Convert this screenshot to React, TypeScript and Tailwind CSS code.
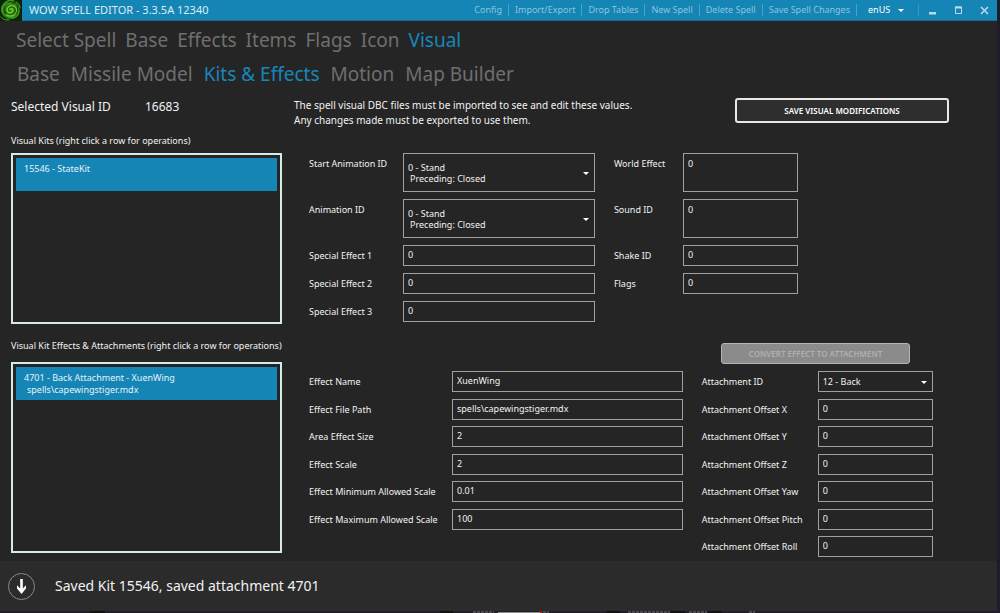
import React, { useId } from "react";

const frame = "border border-[#a0a0a0] bg-[#252525] text-[#f2f2f2] text-[9px] leading-3 rounded-none outline-none";

function Arrow() {
  return (
    <svg
      className="pointer-events-none absolute right-[6px] top-1/2 -mt-[1px] h-[3px] w-[6px]"
      viewBox="0 0 6 3"
      aria-hidden="true"
    >
      <path d="M0 0h6L3 3z" fill="#ffffff" />
    </svg>
  );
}

type FieldProps = {
  label: string;
  value: string;
  kind?: "text" | "area" | "select" | "tall-select";
  detail?: string;
  second?: boolean;
};

function Field({ label, value, kind = "text", detail, second }: FieldProps) {
  const id = useId();
  const column = second ? "col-start-3 pl-[19px]" : "col-start-1";
  const fieldColumn = second ? "col-start-4" : "col-start-2";
  return (
    <>
      <label
        htmlFor={id}
        className={`${column} pt-[5px] text-[9px] leading-3 whitespace-nowrap text-[#f2f2f2]`}
      >
        {label}
      </label>
      {kind === "text" && (
        <input
          id={id}
          defaultValue={value}
          className={`${frame} ${fieldColumn} h-[21px] w-full min-w-0 px-1 pb-[2px]`}
        />
      )}
      {kind === "area" && (
        <textarea
          id={id}
          defaultValue={value}
          className={`${frame} ${fieldColumn} block h-[39px] w-full min-w-0 resize-none px-1 pt-1`}
        />
      )}
      {kind === "select" && (
        <div className={`${fieldColumn} relative h-[21px]`}>
          <select id={id} className={`${frame} block h-full w-full appearance-none px-1`}>
            <option>{value}</option>
          </select>
          <Arrow />
        </div>
      )}
      {kind === "tall-select" && (
        <div className={`${fieldColumn} relative h-[39px]`}>
          <select id={id} className={`${frame} block h-full w-full appearance-none px-1 pb-[10px]`}>
            <option>{value}</option>
          </select>
          <span className="pointer-events-none absolute bottom-[7px] left-[7px] text-[9px] leading-3 text-[#f2f2f2]">
            {detail}
          </span>
          <Arrow />
        </div>
      )}
    </>
  );
}

function Tabs({ items, active, className }: { items: string[]; active: string; className: string }) {
  return (
    <nav className={`flex items-center whitespace-nowrap text-[19px] leading-6 ${className}`}>
      {items.map((item) => (
        <button key={item} type="button" className={item === active ? "text-[#1886bb]" : "text-[#6f6f6f]"}>
          {item}
        </button>
      ))}
    </nav>
  );
}

function Spiral() {
  return (
    <svg className="h-[21px] w-[22px] shrink-0" viewBox="0 0 22 21" aria-hidden="true">
      <rect width="22" height="21" fill="#0b2509" />
      <circle cx="10.500" cy="10" r="9.500" fill="#1f6412" />
      <g fill="none" strokeLinecap="round">
        <path d="M10 10c1-2 4-1 3 1s-5 3-6 0 1-6 5-6 7 3 5 7-6 6-10 4-6-6-4-10 6-6 10-5" stroke="#3c9a1f" strokeWidth="2.200" />
        <path d="M10 9c2-1 4 1 2 3s-5 0-5-2 3-5 6-4 5 4 3 7-6 4-9 2" stroke="#7fd02b" strokeWidth="1.100" />
        <path d="M3 12c0-5 3-9 8-9M19 11c0 4-3 7-7 7M1 17c2 3 5 3 8 3M16 2c3 1 4 4 4 6" stroke="#55b026" strokeWidth="1" />
        <path d="M5 6c-1 2-2 5 0 8M17 6c1 3 1 6-1 8M8 2c2-1 5-1 7 1" stroke="#0d3509" strokeWidth="0.900" />
      </g>
    </svg>
  );
}

const commands = ["Config", "Import/Export", "Drop Tables", "New Spell", "Delete Spell", "Save Spell Changes"];

function TitleBar() {
  return (
    <header className="flex h-[21px] items-center border-b border-[#146d97] bg-[#1585b5]">
      <Spiral />
      <h1 className="ml-[7px] text-[11px] leading-4 whitespace-nowrap text-[#dcedf5]">
        WOW SPELL EDITOR - 3.3.5A 12340
      </h1>
      <div className="ml-auto flex items-center text-[9px] leading-3 whitespace-nowrap text-[#8cc4de]">
        {commands.map((command) => (
          <button key={command} type="button" className="border-r border-[#4ba2c8] px-[6px]">
            {command}
          </button>
        ))}
        <div className="relative ml-[7px] w-[46px]">
          <select aria-label="Language" className="block w-full appearance-none pl-1 text-white outline-none">
            <option>enUS</option>
          </select>
          <Arrow />
        </div>
        <span className="ml-2 h-3 w-px bg-[#3a98c2]" />
      </div>
      <div className="flex h-full items-center text-[#b9dcec]">
        <button type="button" aria-label="Minimize" className="grid h-full w-[26px] place-items-center">
          <svg className="h-[9px] w-[9px]" viewBox="0 0 9 9" aria-hidden="true">
            <path d="M1 6h7v2.500H1z" fill="currentColor" />
          </svg>
        </button>
        <button type="button" aria-label="Maximize" className="grid h-full w-[26px] place-items-center">
          <svg className="h-[9px] w-[9px]" viewBox="0 0 9 9" aria-hidden="true">
            <path d="M1.500 1h6v6.500h-6z" fill="none" stroke="currentColor" />
            <path d="M1 0.500h7v2H1z" fill="currentColor" />
          </svg>
        </button>
        <button type="button" aria-label="Close" className="grid h-full w-[26px] place-items-center">
          <svg className="h-[9px] w-[9px]" viewBox="0 0 9 9" aria-hidden="true">
            <path d="M1 1l7 7M8 1L1 8" fill="none" stroke="currentColor" strokeWidth="1.500" />
          </svg>
        </button>
      </div>
    </header>
  );
}

function RowList({ title, lines, className }: { title: string; lines: string[]; className: string }) {
  return (
    <>
      <h2 className="text-[9px] leading-3 whitespace-nowrap text-[#f2f2f2]">{title}</h2>
      <ul aria-label={title} className={`border-2 border-[#d5ebe8] p-[3px] ${className}`}>
        <li className="h-[33px] bg-[#1585b5] px-2 pt-[5px] text-[9px] leading-3 text-[#e6f2f8]">
          {lines.map((line, i) => (
            <div key={line} className={i > 0 ? "pl-[3px]" : ""}>
              {line}
            </div>
          ))}
        </li>
      </ul>
    </>
  );
}

function Backdrop() {
  return (
    <svg className="h-[2px] w-full bg-[#211d29]" viewBox="0 0 1000 2" preserveAspectRatio="none" aria-hidden="true">
      <path d="M90 1h15M440 1h13M606 1h14M670 1h15M708 1h14" stroke="#111111" strokeWidth="2" />
      <path d="M473 1h21M543 1h6M628 1h42M689 1h18M749 1h6" stroke="#77757a" strokeDasharray="3 1" />
      <path d="M498 1.500h42" stroke="#8d8d8d" />
      <path d="M540 1h2" stroke="#c01818" strokeWidth="2" />
    </svg>
  );
}

export default function App() {
  return (
    <div className="flex min-h-screen flex-col bg-[#252525] font-['Noto_Sans',sans-serif]">
      <div className="flex flex-1 flex-col border-r-[3px] border-[#1f1c29]">
        <TitleBar />
        <Tabs
          className="mt-[7px] gap-[9px] pl-4"
          items={["Select Spell", "Base", "Effects", "Items", "Flags", "Icon", "Visual"]}
          active="Visual"
        />
        <Tabs
          className="mt-[10px] gap-[11px] pl-[17px]"
          items={["Base", "Missile Model", "Kits & Effects", "Motion", "Map Builder"]}
          active="Kits & Effects"
        />
        <div className="mt-3 flex h-[29px] items-start pr-12 pl-[11px] text-[#f2f2f2]">
          <span className="w-[134px] pt-[1px] text-[12px] leading-4 whitespace-nowrap">Selected Visual ID</span>
          <span className="w-[149px] pt-[1px] text-[12px] leading-4">16683</span>
          <p className="text-[10px] leading-[15px] whitespace-nowrap">
            The spell visual DBC files must be imported to see and edit these values.
            <br />
            Any changes made must be exported to use them.
          </p>
          <button
            type="button"
            className="ml-auto h-[25px] w-[214px] rounded-[3px] border-2 border-[#e8e8e8] bg-[#2e2e2e] text-[8px] font-semibold text-white"
          >
            SAVE VISUAL MODIFICATIONS
          </button>
        </div>

        <section className="mt-2 grid grid-cols-[271fr_624fr] gap-x-[27px] pr-16 pl-[11px]">
          <div className="flex flex-col">
            <RowList title="Visual Kits (right click a row for operations)" lines={["15546 - StateKit"]} className="mt-[6px] h-[171px]" />
          </div>
          <div className="grid grid-cols-[94px_5fr_88px_3fr_135px] content-start gap-y-[7px] pt-[18px]">
            <Field label="Start Animation ID" value="0 - Stand" detail="Preceding: Closed" kind="tall-select" />
            <Field label="World Effect" value="0" kind="area" second />
            <Field label="Animation ID" value="0 - Stand" detail="Preceding: Closed" kind="tall-select" />
            <Field label="Sound ID" value="0" kind="area" second />
            <Field label="Special Effect 1" value="0" />
            <Field label="Shake ID" value="0" second />
            <Field label="Special Effect 2" value="0" />
            <Field label="Flags" value="0" second />
            <Field label="Special Effect 3" value="0" />
          </div>
        </section>

        <section className="mt-4 mb-2 grid grid-cols-[271fr_624fr] gap-x-[27px] pr-16 pl-[11px]">
          <div className="flex flex-col">
            <RowList
              title="Visual Kit Effects & Attachments (right click a row for operations)"
              lines={["4701 - Back Attachment - XuenWing", "spells\\capewingstiger.mdx"]}
              className="mt-[10px] h-[191px]"
            />
          </div>
          <div className="-mb-1 flex flex-col gap-[7px] pt-[3px]">
            <div className="flex justify-end pr-[23px]">
              <button
                type="button"
                disabled
                className="h-[21px] w-[189px] rounded-[3px] border border-[#b4b4b4] bg-[#8b8b8b] text-[8px] font-semibold text-[#b0b0b0]"
              >
                CONVERT EFFECT TO ATTACHMENT
              </button>
            </div>
            <div className="grid flex-1 grid-cols-[143px_2fr_135px_1fr] content-between">
              <Field label="Effect Name" value="XuenWing" />
              <Field label="Attachment ID" value="12 - Back" kind="select" second />
              <Field label="Effect File Path" value="spells\capewingstiger.mdx" />
              <Field label="Attachment Offset X" value="0" second />
              <Field label="Area Effect Size" value="2" />
              <Field label="Attachment Offset Y" value="0" second />
              <Field label="Effect Scale" value="2" />
              <Field label="Attachment Offset Z" value="0" second />
              <Field label="Effect Minimum Allowed Scale" value="0.01" />
              <Field label="Attachment Offset Yaw" value="0" second />
              <Field label="Effect Maximum Allowed Scale" value="100" />
              <Field label="Attachment Offset Pitch" value="0" second />
              <Field label="Attachment Offset Roll" value="0" second />
            </div>
          </div>
        </section>

        <footer className="flex flex-1 items-center gap-5 bg-[#2b2b2b] pl-2">
          <button
            type="button"
            aria-label="Show status"
            className="grid h-[27px] w-[27px] place-items-center rounded-full border border-[#8a8a8a]"
          >
            <svg className="h-[15px] w-[13px]" viewBox="0 0 13 15" aria-hidden="true">
              <path d="M5.200 0h2.600v9.500l3.200-3.300v3.300L6.500 15 2 9.500V6.200l3.200 3.300z" fill="#ffffff" />
            </svg>
          </button>
          <output className="text-[14px] leading-5 text-[#f2f2f2]">Saved Kit 15546, saved attachment 4701</output>
        </footer>
      </div>
      <Backdrop />
    </div>
  );
}
